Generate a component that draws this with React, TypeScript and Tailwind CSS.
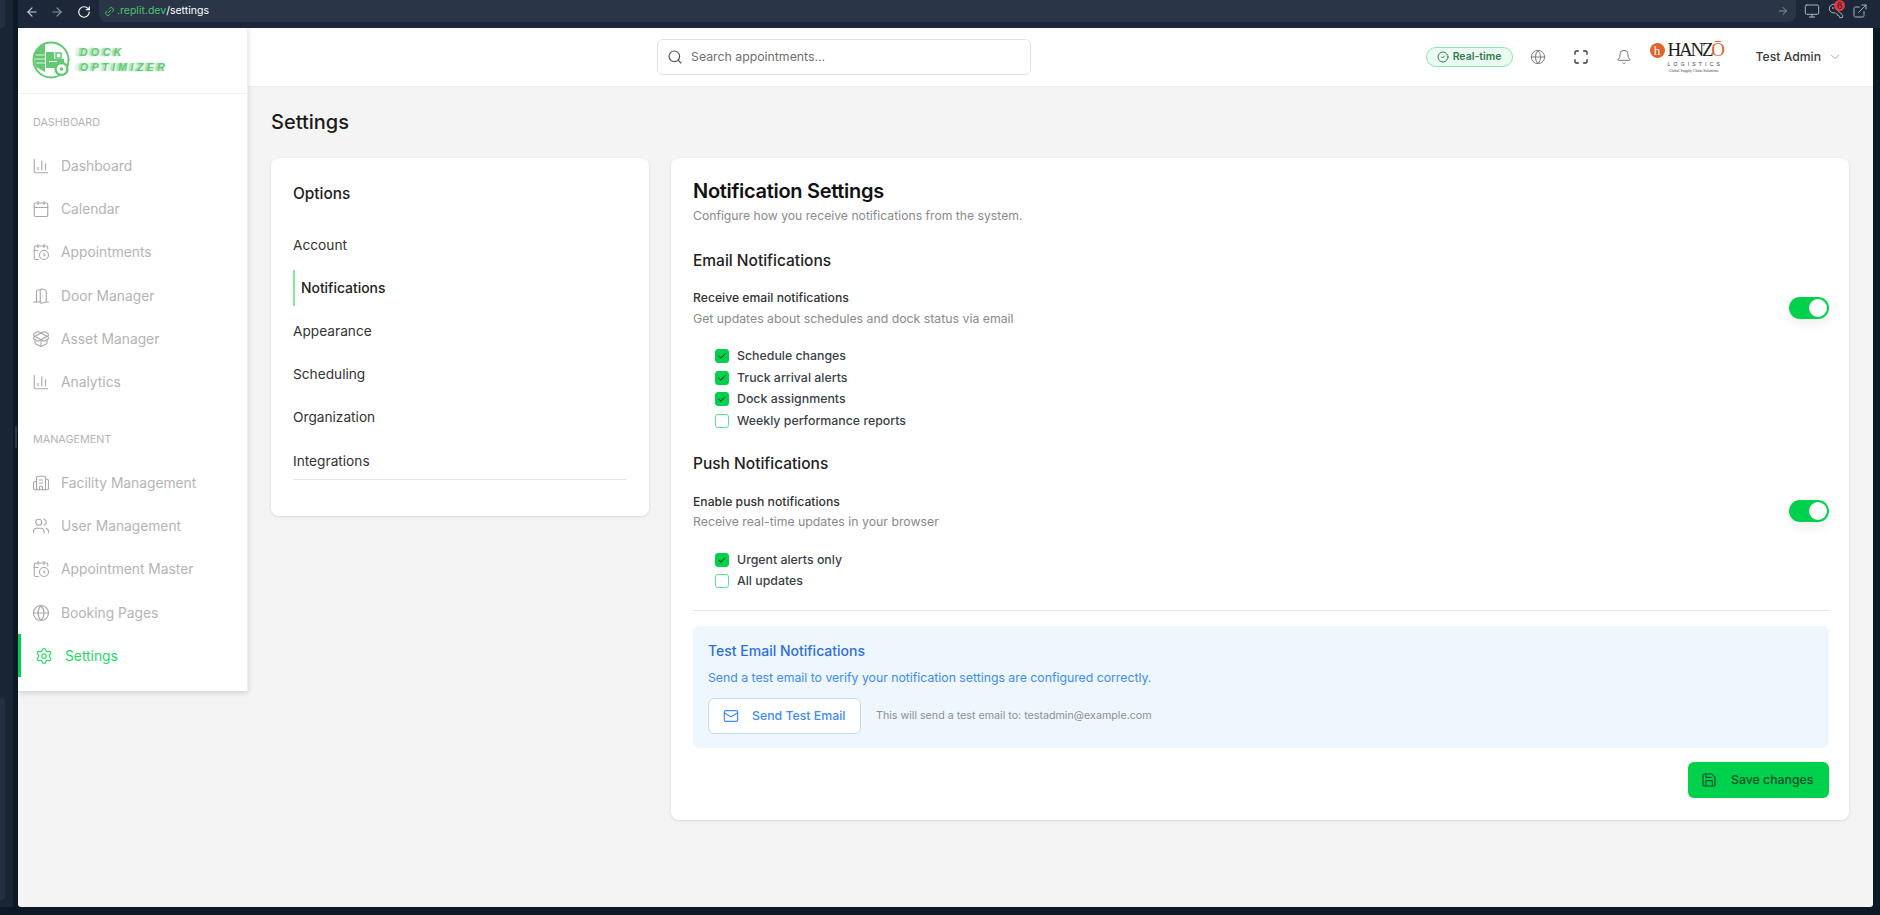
import {
  ArrowLeft, ArrowRight, Bell, Building2, Calendar, CalendarClock, ChartColumn, Check, ChevronDown, CircleCheck,
  DoorOpen, ExternalLink, Globe, KeyRound, Link2, Mail, Maximize, Monitor, PackageOpen, RotateCw, Save, Search, Settings, Users,
} from 'lucide-react';

// ─── Data ─────────────────────────────────────────────────────────────────────

const dashboardNav = [
  { icon: ChartColumn, label: 'Dashboard' },
  { icon: Calendar, label: 'Calendar' },
  { icon: CalendarClock, label: 'Appointments' },
  { icon: DoorOpen, label: 'Door Manager' },
  { icon: PackageOpen, label: 'Asset Manager' },
  { icon: ChartColumn, label: 'Analytics' },
];

const managementNav = [
  { icon: Building2, label: 'Facility Management' },
  { icon: Users, label: 'User Management' },
  { icon: CalendarClock, label: 'Appointment Master' },
  { icon: Globe, label: 'Booking Pages' },
];

const options = ['Account', 'Notifications', 'Appearance', 'Scheduling', 'Organization', 'Integrations'];

// ─── Small parts ──────────────────────────────────────────────────────────────

function NavItem({ icon: Icon, label }: { icon: React.ElementType; label: string }) {
  return (
    <div className="h-[43.2px] flex items-center pl-[14px] gap-[11px] text-[#b4b4b4]">
      <Icon className="w-[18px] h-[18px] shrink-0 text-[#a8a8a8]" strokeWidth={1.5} />
      <span className="text-[13.8px] leading-5">{label}</span>
    </div>
  );
}

function Toggle() {
  return (
    <div className="w-10 h-[22px] mb-[2px] rounded-full bg-[#00d14d] flex items-center justify-end pr-[2px] shadow-[0_6px_10px_rgba(0,0,0,0.06)]">
      <div className="w-[18px] h-[18px] rounded-full bg-white" />
    </div>
  );
}

function CheckRow({ label, checked }: { label: string; checked?: boolean }) {
  return (
    <div className="h-[21.5px] flex items-center pl-[22px] gap-2">
      <div className={`w-[14px] h-[14px] rounded-[3px] border flex items-center justify-center ${checked ? 'bg-[#00d14d] border-[#00d14d]' : 'bg-white border-[#5fe08d]'}`}>
        {checked && <Check className="w-[10px] h-[10px] text-[#064e22]" strokeWidth={2.5} />}
      </div>
      <span className="text-[12.35px] font-medium text-[#3a3f47] leading-4">{label}</span>
    </div>
  );
}

function Logo() {
  return (
    <div className="flex items-center gap-[10px]">
      <svg width="38" height="38" viewBox="0 0 38 38">
        <circle cx="19" cy="19" r="17.5" fill="none" stroke="#62c872" strokeWidth="2" />
        <path d="M9 5 L13 4 L13 31 L4 26 Q1 18 4 11 Z" fill="#62c872" />
        <path d="M4 14h9M3 18h10M4 22h9" stroke="#fff" strokeWidth="0.8" />
        <path d="M14 11h8v7h10v9H14z" fill="#62c872" />
        <rect x="24" y="12" width="5" height="5" fill="none" stroke="#62c872" strokeWidth="1.5" />
        <rect x="17" y="20" width="8" height="1" fill="#fff" />
        <circle cx="29.5" cy="28" r="6" fill="#fff" stroke="#62c872" strokeWidth="2.4" />
        <circle cx="29.5" cy="28" r="1.7" fill="#62c872" />
      </svg>
      <div className="font-['Liberation_Sans',sans-serif] italic font-bold text-[10.5px] leading-[15px] tracking-[0.33em] text-[#62c872] [text-shadow:-2px_0_1.5px_rgba(98,200,114,0.7),-5px_0_2px_rgba(98,200,114,0.3)]">
        <div>DOCK</div>
        <div>OPTIMIZER</div>
      </div>
    </div>
  );
}

function HanzoLogo() {
  return (
    <div className="w-[78px] flex flex-col items-start">
      <div className="flex items-center h-[18px]">
        <div className="w-[15px] h-[15px] rounded-full bg-[#e2622a] flex items-center justify-center text-white text-[13px] leading-none font-['Liberation_Serif',serif]">h</div>
        <span className="ml-[3px] font-['Liberation_Serif',serif] text-[19px] leading-[18px] tracking-[-0.12em] text-[#1d1d1d]">
          HANZ<span className="text-[#e2622a]">Ō</span>
        </span>
      </div>
      <div className="text-[5px] leading-[8px] tracking-[0.64em] text-[#333] font-['Liberation_Sans',sans-serif] mt-[1px] pl-[18px] whitespace-nowrap">LOGISTICS</div>
      <div className="text-[4px] leading-[5px] text-[#444] font-['Liberation_Serif',serif] pl-[19px] whitespace-nowrap">Global Supply Chain Solutions</div>
    </div>
  );
}

// ─── Main ─────────────────────────────────────────────────────────────────────

export default function App() {
  return (
    <div className="w-[1880px] h-[915px] flex flex-col bg-[#0d1826] overflow-hidden font-['Inter',sans-serif]">
      {/* Browser bar */}
      <div className="h-[28px] shrink-0 flex">
        <div className="w-[13px] shrink-0 bg-[#192435]">
          <div className="w-[5px] h-[28px] bg-[#252f42] rounded-br-[4px]" />
        </div>
        <div className="w-[5px] shrink-0" />
        <div className="flex-1 min-w-0 flex bg-[#1c2839]">
          <div className="flex items-center gap-[11px] pb-[5px] shrink-0 pl-[7px]">
            <ArrowLeft className="w-[14px] h-[14px] text-[#c9ced6]" />
            <ArrowRight className="w-[14px] h-[14px] text-[#8b93a0]" />
            <RotateCw className="w-[14px] h-[14px] text-white ml-[2px]" />
          </div>
          <div className="ml-[8px] w-[1697px] h-[22px] bg-[#2a3547] rounded-br-lg rounded-bl-lg flex items-center pl-[5px] pr-[3px]">
            <Link2 className="w-[11px] h-[11px] text-[#4fc16f] -rotate-45" />
            <span className="text-[10.5px] leading-4 ml-[2px] text-[#4fc16f]">.replit.dev</span>
            <span className="text-[10.5px] leading-4 text-white">/settings</span>
            <ArrowRight className="w-3 h-3 text-[#8b93a0] ml-auto mr-1" />
          </div>
          <div className="flex items-start gap-[8px] pt-[3px] pl-[8px]">
            <Monitor className="w-4 h-4 text-[#a9b0bb]" strokeWidth={1.5} />
            <div className="relative">
              <KeyRound className="w-4 h-4 text-[#a9b0bb] -scale-x-100" strokeWidth={1.5} />
              <span className="absolute -top-[3px] left-[6px] w-[11px] h-[11px] rounded-full bg-[#e5343f] text-[9px] leading-[11px] text-center text-[#20242c]">6</span>
            </div>
            <ExternalLink className="w-4 h-4 text-[#a9b0bb]" strokeWidth={1.5} />
          </div>
        </div>
      </div>

      <div className="flex-1 min-h-0 flex">
        {/* Left edge */}
        <div className="w-[18px] shrink-0 flex">
          <div className="w-[13px] bg-[#192435] flex flex-col justify-end pb-[7px]">
            <div className="w-[5px] h-[202px] bg-[#252f42] rounded-r-[4px]" />
          </div>
          <div className="w-[5px] pt-[398px] pl-[2px]">
            <div className="w-[2px] h-[22px] bg-[#2a3547]" />
          </div>
        </div>

        {/* App window */}
        <div className="flex-1 min-w-0 flex bg-[#f4f4f4] rounded-bl-[3px] rounded-br-[3px] overflow-hidden">
          {/* Sidebar */}
          <aside className="w-[230px] h-[663px] shrink-0 bg-white border-r border-[#f0f0f0] shadow-[0_2px_6px_rgba(0,0,0,0.14)] z-10">
            <div className="h-[66px] border-b border-[#f0f0f0] flex items-center pl-[14px] pb-[1px]">
              <Logo />
            </div>
            <div className="pt-[21px] pl-[15px] text-[10.8px] leading-4 text-[#b4b4b4]">DASHBOARD</div>
            <div className="mt-[13.4px]">
              {dashboardNav.map((item) => (
                <NavItem key={item.label} {...item} />
              ))}
            </div>
            <div className="mt-[28px] pl-[15px] text-[10.8px] leading-4 text-[#b4b4b4]">MANAGEMENT</div>
            <div className="mt-[14px]">
              {managementNav.map((item) => (
                <NavItem key={item.label} {...item} />
              ))}
              <div className="h-[43.2px] flex items-center border-l-[3px] border-[#00d14d] pl-[14px] gap-[12px] text-[#22d964]">
                <Settings className="w-[18px] h-[18px] shrink-0" strokeWidth={1.5} />
                <span className="text-[13.8px] leading-5">Settings</span>
              </div>
            </div>
          </aside>

          <div className="flex-1 min-w-0 flex flex-col">
            {/* Header */}
            <header className="h-[59px] shrink-0 bg-white border-b border-[#ececec] flex items-center pl-[409px] pr-[31px]">
              <div className="w-[374px] h-[36px] rounded-md border border-[#e2e2e2] flex items-center pl-[9px] gap-[8px]">
                <Search className="w-4 h-4 text-[#555]" strokeWidth={1.75} />
                <span className="text-[12.3px] leading-4 text-[#6f6f6f]">Search appointments...</span>
              </div>
              <div className="ml-auto flex items-center">
                <div className="w-[87px] h-[20px] rounded-full border border-[#8ce8ae] bg-[#ecfbf1] flex items-center justify-center gap-[4px]">
                  <CircleCheck className="w-3 h-3 text-[#2f7d53]" />
                  <span className="text-[10.5px] leading-4 font-semibold text-[#2f7d53]">Real-time</span>
                </div>
                <Globe className="w-4 h-4 ml-[17px] text-[#7b7b7b]" strokeWidth={1.5} />
                <Maximize className="w-4 h-4 ml-[27px] text-[#333]" strokeWidth={2} />
                <Bell className="w-4 h-4 ml-[27px] text-[#777]" strokeWidth={1.5} />
                <div className="ml-[18px]">
                  <HanzoLogo />
                </div>
                <span className="ml-[28px] text-[12.2px] leading-4 font-medium text-[#3a3a3a]">Test Admin</span>
                <ChevronDown className="w-[14px] h-[14px] ml-[7px] text-[#9a9a9a]" strokeWidth={1.5} />
              </div>
            </header>

            {/* Page */}
            <main className="flex-1 min-h-0 pl-[23px] pr-[24px] pt-[21px]">
              <h1 className="text-xl leading-7 font-medium text-[#1c1c1c]">Settings</h1>
              <div className="mt-[22px] flex items-start gap-[22px]">
                {/* Options */}
                <div className="w-[378px] shrink-0 bg-white rounded-lg shadow-[0_1px_3px_rgba(0,0,0,0.12)] pl-[22px] pr-[23px] pt-[24px] pb-[36px]">
                  <h2 className="text-[15.4px] leading-6 font-medium text-[#1c1c1c]">Options</h2>
                  <div className="mt-[21px] space-y-[7.2px] border-b border-[#e5e5e5]">
                    {options.map((o) =>
                      o === 'Notifications' ? (
                        <div key={o} className="h-9 flex items-center border-l-2 border-[#86e5a5] pl-[6px] text-[13.9px] font-medium text-[#222]">{o}</div>
                      ) : (
                        <div key={o} className="h-9 flex items-center text-[13.7px] text-[#333]">{o}</div>
                      ),
                    )}
                  </div>
                </div>

                {/* Notification settings */}
                <div className="flex-1 min-w-0 bg-white rounded-lg shadow-[0_1px_3px_rgba(0,0,0,0.12)] pl-[22px] pr-[20px] pt-[19px] pb-[22px]">
                  <h2 className="text-xl leading-7 font-semibold tracking-[-0.015em] text-[#111]">Notification Settings</h2>
                  <p className="mt-[3px] text-[12.2px] leading-4 text-[#8a8a8a]">Configure how you receive notifications from the system.</p>

                  <h3 className="mt-[25px] text-[15.5px] leading-6 font-medium text-[#222]">Email Notifications</h3>
                  <div className="mt-[17px] flex items-center justify-between">
                    <div>
                      <div className="text-[12.2px] leading-4 font-medium text-[#333]">Receive email notifications</div>
                      <div className="mt-[5px] text-[12.3px] leading-4 text-[#8a8a8a]">Get updates about schedules and dock status via email</div>
                    </div>
                    <Toggle />
                  </div>
                  <div className="mt-[18.5px]">
                    <CheckRow label="Schedule changes" checked />
                    <CheckRow label="Truck arrival alerts" checked />
                    <CheckRow label="Dock assignments" checked />
                    <CheckRow label="Weekly performance reports" />
                  </div>

                  <h3 className="mt-[20px] text-[15.5px] leading-6 font-medium text-[#222]">Push Notifications</h3>
                  <div className="mt-[18px] flex items-center justify-between">
                    <div>
                      <div className="text-[12.2px] leading-4 font-medium text-[#333]">Enable push notifications</div>
                      <div className="mt-[4px] text-[12.3px] leading-4 text-[#8a8a8a]">Receive real-time updates in your browser</div>
                    </div>
                    <Toggle />
                  </div>
                  <div className="mt-[19.5px]">
                    <CheckRow label="Urgent alerts only" checked />
                    <CheckRow label="All updates" />
                  </div>

                  <div className="mt-[18px] border-t border-[#e5e5e5]" />

                  {/* Test email */}
                  <div className="mt-[15px] h-[122px] rounded-md bg-[#eef6fe] px-[15px] pt-[17px]">
                    <div className="text-sm leading-4 font-medium text-[#2f6fdb]">Test Email Notifications</div>
                    <div className="mt-[11px] text-[12.27px] leading-4 text-[#3f8cf2]">Send a test email to verify your notification settings are configured correctly.</div>
                    <div className="mt-[12px] flex items-center gap-[15px]">
                      <button className="w-[153px] h-[36px] rounded-md border border-[#bfdbfe] bg-white flex items-center pl-[14px] gap-[13px] text-[12.3px] font-medium text-[#3f8cf2]">
                        <Mail className="w-4 h-4" strokeWidth={1.75} />
                        Send Test Email
                      </button>
                      <span className="text-[10.7px] leading-4 text-[#8d9096]">This will send a test email to: testadmin@example.com</span>
                    </div>
                  </div>

                  <div className="mt-[14px] flex justify-end">
                    <button className="w-[141px] h-[36px] rounded-md bg-[#00d14d] flex items-center pl-[13px] gap-[14px] text-[12.3px] font-medium text-[#0b4f2a]">
                      <Save className="w-4 h-4" strokeWidth={1.75} />
                      Save changes
                    </button>
                  </div>
                </div>
              </div>
            </main>
          </div>
        </div>

        {/* Right edge */}
        <div className="w-[7px] shrink-0" />
      </div>

      {/* Bottom edge */}
      <div className="h-[8px] shrink-0" />
    </div>
  );
}
